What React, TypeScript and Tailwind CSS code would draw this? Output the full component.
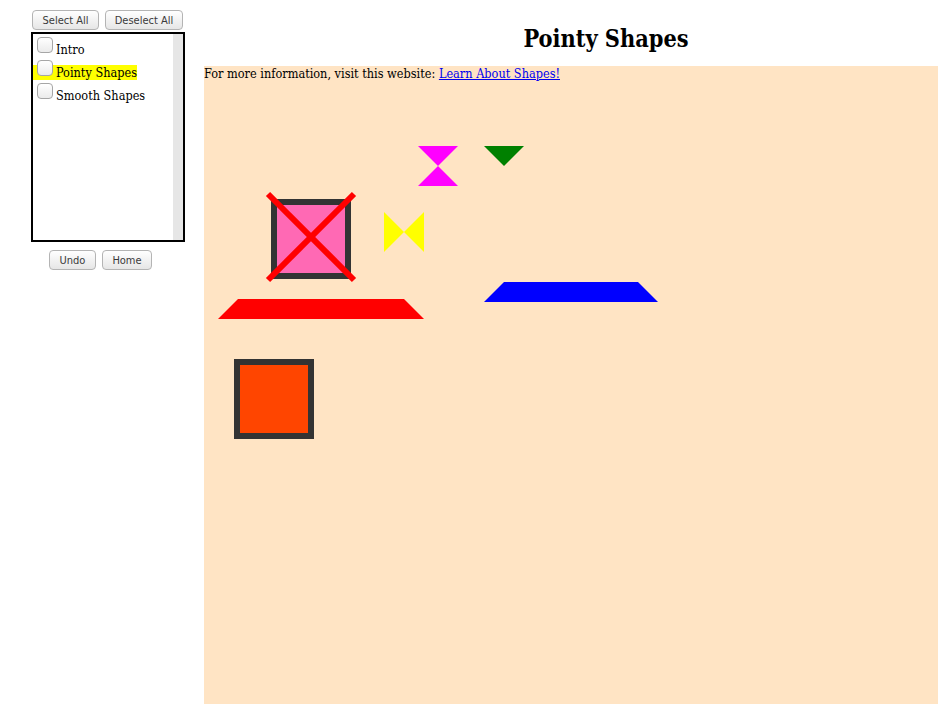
import React from 'react';

const btn =
  "h-5 flex items-center justify-center whitespace-nowrap rounded-[4px] border border-[#b4b4b4] bg-gradient-to-b from-white to-[#e6e6e6] text-[11px] leading-none text-[#3a3a3a] font-['DejaVu_Sans_Condensed','DejaVu_Sans',sans-serif]";

const Box: React.FC = () => (
  <span className="inline-block w-4 h-4 ml-1 mr-[3px] rounded-[4px] border border-[#a6a6a6] bg-gradient-to-b from-white to-[#ebebeb] align-[1px]" />
);

const topics = [
  { name: 'Intro', hi: false },
  { name: 'Pointy Shapes', hi: true },
  { name: 'Smooth Shapes', hi: false },
];

const App: React.FC = () => {
  return (
    <div className="flex min-h-[704px] bg-white font-['DejaVu_Serif_Condensed','DejaVu_Serif',serif] text-black">
      <aside className="w-[204px] shrink-0">
        <div className="flex gap-[6px] pl-8 pt-[10px]">
          <button className={btn + ' w-[67px]'}>Select All</button>
          <button className={btn + ' w-[78px]'}>Deselect All</button>
        </div>
        <div className="ml-[31px] mt-[2px] flex h-[210px] w-[154px] border-2 border-black">
          <div className="flex-1 text-[12.6px]">
            {topics.map((t) => (
              <div key={t.name} className="h-[23px] leading-[15px] pt-[3px]">
                <span className={t.hi ? 'bg-[#ffff00]' : ''}>
                  <Box />
                  {t.name}
                </span>
              </div>
            ))}
          </div>
          <div className="w-[10px] bg-[#e6e6e6]" />
        </div>
        <div className="flex gap-[6px] pl-[49px] pt-2">
          <button className={btn + ' w-[47px]'}>Undo</button>
          <button className={btn + ' w-[50px]'}>Home</button>
        </div>
      </aside>

      <main className="mr-px flex flex-1 flex-col">
        <h1 className="pt-[25px] pl-[70px] text-center text-[23.3px] font-bold leading-[27px]">Pointy Shapes</h1>
        <div className="relative mt-[14px] flex-1 bg-[#ffe4c4] text-[12.6px] leading-[15px]">
          <p>
            For more information, visit this website:{' '}
            <a href="#" className="text-[#0000ee] underline">Learn About Shapes!</a>
          </p>

          {/* magenta hourglass */}
          <svg className="absolute left-[214px] top-[80px]" width="40" height="40">
            <polygon points="0,0 40,0 20,20" fill="#ff00ff" />
            <polygon points="20,20 40,40 0,40" fill="#ff00ff" />
          </svg>

          {/* green triangle */}
          <svg className="absolute left-[280px] top-[80px]" width="40" height="20">
            <polygon points="0,0 40,0 20,20" fill="#008000" />
          </svg>

          {/* yellow bowtie */}
          <svg className="absolute left-[180px] top-[146px]" width="40" height="40">
            <polygon points="0,0 20,20 0,40" fill="#ffff00" />
            <polygon points="40,0 40,40 20,20" fill="#ffff00" />
          </svg>

          {/* crossed-out pink square */}
          <div className="absolute left-[67px] top-[133px] h-[80px] w-[80px] border-[6px] border-[#333333] bg-[#ff69b4]" />
          <svg className="absolute left-[58px] top-[124px]" width="100" height="100">
            <line x1="6" y1="4" x2="92" y2="90" stroke="#ff0000" strokeWidth="6" />
            <line x1="92" y1="4" x2="6" y2="90" stroke="#ff0000" strokeWidth="6" />
          </svg>

          {/* red trapezoid */}
          <svg className="absolute left-[14px] top-[233px]" width="206" height="20">
            <polygon points="20,0 186,0 206,20 0,20" fill="#ff0000" />
          </svg>

          {/* blue trapezoid */}
          <svg className="absolute left-[280px] top-[216px]" width="174" height="20">
            <polygon points="20,0 154,0 174,20 0,20" fill="#0000ff" />
          </svg>

          {/* orange square */}
          <div className="absolute left-[30px] top-[293px] h-[80px] w-[80px] border-[6px] border-[#333333] bg-[#ff4500]" />
        </div>
      </main>
    </div>
  );
};

export default App;
